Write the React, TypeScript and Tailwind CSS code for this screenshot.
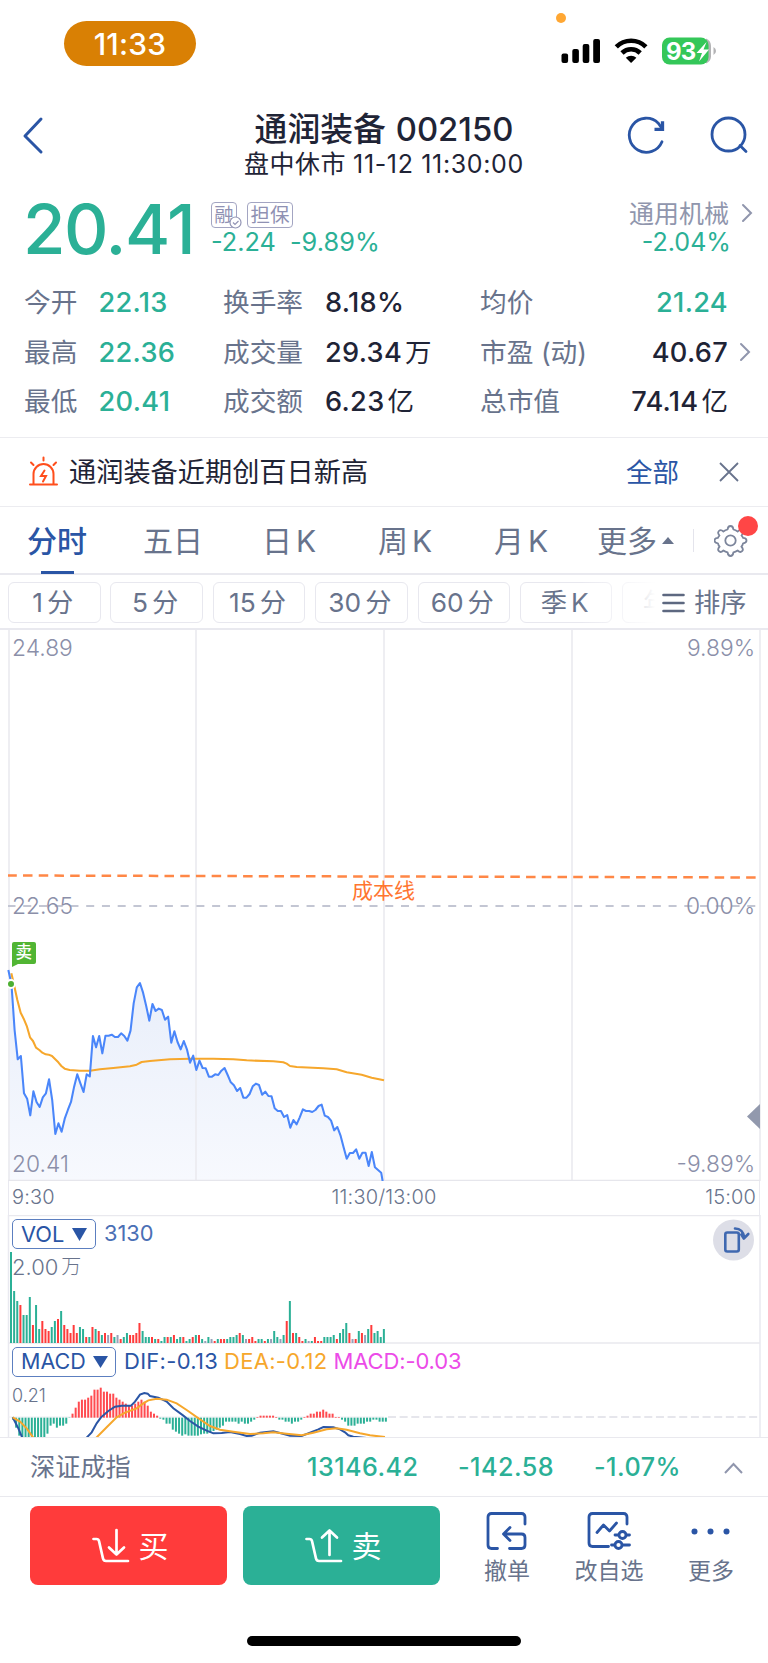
import type { FC, ReactNode } from 'react';

type Stat = { label: string; value: string; unit?: string; up?: boolean };

const STATS: Stat[][] = [
    [
        { label: '今开', value: '22.13', up: true },
        { label: '换手率', value: '8.18%' },
        { label: '均价', value: '21.24', up: true },
    ],
    [
        { label: '最高', value: '22.36', up: true },
        { label: '成交量', value: '29.34', unit: '万' },
        { label: '市盈 (动)', value: '40.67' },
    ],
    [
        { label: '最低', value: '20.41', up: true },
        { label: '成交额', value: '6.23', unit: '亿' },
        { label: '总市值', value: '74.14', unit: '亿' },
    ],
];

const TABS: [string, string][] = [
    ['分时', ''],
    ['五日', ''],
    ['日', 'K'],
    ['周', 'K'],
    ['月', 'K'],
];

const PERIODS: [string, string][] = [
    ['1', '分'],
    ['5', '分'],
    ['15', '分'],
    ['30', '分'],
    ['60', '分'],
    ['季', 'K'],
    ['年', 'K'],
];

// One value per minute, in thirds of a pixel below the cost line area.
const STEP = 9.4;
const PRICE = [
    330, 372, 510, 598, 588, 700, 716, 766, 694, 726, 741, 712, 700, 658, 720,
    822, 790, 815, 776, 750, 726, 680, 643, 670, 696, 643, 649, 528, 562, 528,
    580, 527, 527, 524, 531, 531, 520, 528, 542, 512, 430, 382, 369, 398, 438,
    482, 432, 453, 446, 450, 479, 470, 548, 514, 546, 568, 543, 568, 608, 587,
    630, 602, 624, 625, 650, 650, 643, 645, 632, 624, 645, 667, 676, 693, 684,
    713, 713, 702, 679, 671, 675, 704, 695, 708, 709, 745, 753, 753, 771, 765,
    803, 780, 793, 772, 748, 753, 753, 756, 750, 738, 734, 767, 771, 782, 811,
    801, 826, 862, 896, 879, 879, 868, 896, 878, 878, 918, 876, 922, 930, 938,
];

const AVERAGE =
    '34,340 40,365 52,420 62,458 71,476 81,500 90,532 99,543 108,563 118,570 127,578 137,583 146,584 156,588 165,597 175,607 184,618 194,626 209,630 240,632 270,632 300,628 340,624 390,619 410,614 425,606 450,603 510,598 570,596 640,596 700,598 740,601 820,604 850,607 860,611 870,618 890,621 970,625 1010,628 1040,637 1085,644 1115,653 1152,661';

// g = falling minute, r = rising, n = flat; the number is half the bar height.
const VOLUME =
    'g45.5 g26 g21 r19 g14 g14 g23 r9 g19 g7 r11 r7 r6 g8 g11 r12 g16 r9 r7 r5 r9 r5 g8 g7 r3 g3 r8 g7 r6 g4 r5 n4 r5 g3 n4 r2 g3 g5 r4 r4 r5 r10 g6 g3 g3 r3 g2 r2 g1 g3 r3 g3 r4 g2 g3 r3 g1 g2 r3 g4 r4 g2 n1 g3 n2 r1 g2 r2 r2 g2 g3 g3 g4 r5 g4 n2 r2 r3 r1 g2 g2 r1 g2 n2 g6 g3 n2 g4 r11 g21 r5 g5 r3 r1 g2 n1 g1 r3 r1 r1 g3 g3 g3 g4 r2 g5 g7 g10 r5 n2 r2 g6 r5 n4 g7 r9 g5 g6 g3 g7';

const MACD = [
    -6, -30, -54, -60, -60, -60, -60, -60, -60, -60, -60, -48, -24, -18, -30,
    -24, -24, -18, -1, 12, 30, 48, 54, 54, 60, 66, 84, 84, 90, 78, 78, 72, 72,
    60, 54, 48, 42, 36, 36, 42, 48, 54, 48, 36, 18, 12, 6, -3, -6, -18, -18,
    -36, -42, -48, -54, -50, -54, -54, -54, -54, -50, -48, -48, -44, -40, -36,
    -30, -24, -12, -12, -12, -12, -18, -12, -18, -18, -12, -6, 2, 6, 6, 6, 6,
    6, 2, -6, -6, -12, -12, -18, -12, -12, -6, 2, 6, 12, 12, 18, 18, 24, 18, 12,
    12, 2, 2, -6, -12, -24, -24, -24, -18, -18, -18, -12, -12, -6, -6, -12, -12,
    -12,
];

const DIF =
    'M38,652 L55,685 68,716 M257,716 L275,697 290,670 303,652 325,633 345,620 365,617 393,617 405,605 420,584 433,579 443,581 450,588 475,593 500,605 520,625 550,647 570,663 595,680 620,692 640,700 665,699 690,696 720,702 740,708 755,707 780,698 820,694 840,699 870,707 905,708 930,698 955,688 970,681 1000,682 1020,688 1035,697 1045,706 1060,710 1100,714';
const DEA =
    'M38,652 L60,665 80,685 102,716 M286,716 L320,682 350,652 375,638 410,625 430,610 445,601 470,596 500,599 530,610 560,630 600,658 630,678 660,689 700,695 750,702 790,700 820,697 860,701 905,706 940,698 980,688 1010,685 1040,689 1080,700 1110,706 1155,711';

const BAR_FILL: Record<string, string> = {
    g: '#2bb096',
    r: '#ff3b3b',
    n: '#98a0b8',
};

const Status: FC = () => (
    <div className="relative flex h-[95px] items-start">
        <div className="ml-[64px] mt-[21px] flex h-[45px] w-[132px] items-center justify-center rounded-full bg-[#d98004] pt-px text-[30px] font-medium leading-none tracking-[0.2px] text-white">
            11:33
        </div>
        <div className="absolute left-[556px] top-[13px] size-[10px] rounded-full bg-[#ffa733]" />
        <svg
            className="absolute left-[560px] top-[36px]"
            width="160"
            height="30"
            viewBox="560 36 160 30"
        >
            <rect x="561.5" y="53.5" width="6.6" height="9.5" rx="2" />
            <rect x="572.3" y="49" width="6.6" height="14" rx="2" />
            <rect x="582.7" y="44" width="6.6" height="19" rx="2" />
            <rect x="593.2" y="39" width="6.8" height="24" rx="2" />
            <g fill="none" stroke="#000" strokeWidth="4.6">
                <path d="M616.3 46.8a21 21 0 0 1 29.6 0" />
                <path d="M622 53a13 13 0 0 1 18.2 0" />
            </g>
            <path d="M631.1 63l-5.3-5.2a7.6 7.6 0 0 1 10.6 0z" />
            <path d="M706 38.5a8 8 0 0 1 5 7v11a8 8 0 0 1-5 7z" fill="#b3b3b5" />
            <path d="M713.5 47v8q2.5-1.5 2.5-4t-2.5-4z" fill="#b3b3b5" />
            <rect x="662" y="37.5" width="46.5" height="27" rx="7.5" fill="#34c759" />
            <path d="M706.5 42l-10 11h5.500l-3 8.500 10-12h-5.500z" fill="#fff" />
        </svg>
        <span className="absolute left-[666px] top-[39.5px] text-[24px] font-bold leading-none tracking-[-0.8px] text-white">
            93
        </span>
    </div>
);

const Header: FC = () => (
    <header className="grid h-[90px] grid-cols-[200px_1fr_200px] text-[#1f2436]">
        <svg width="200" height="90" fill="none" stroke="#2a55a5">
            <path
                d="M41 24L25 41l16 16"
                strokeWidth="3"
                strokeLinecap="round"
                strokeLinejoin="round"
            />
        </svg>
        <div className="flex flex-col items-center whitespace-nowrap">
            <h1 className="mt-[17px] flex h-[34px] items-center gap-[10px] text-[32.8px] font-medium leading-none">
                <span>通润装备</span>
                <span>002150</span>
            </h1>
            <p className="mt-[5px] flex h-[26px] items-center gap-[7px] text-[25px] leading-none">
                <span className="tracking-[0.5px]">盘中休市</span>
                <span className="tracking-[0.65px]">11-12 11:30:00</span>
            </p>
        </div>
        <svg
            width="200"
            height="90"
            viewBox="568 95 200 90"
            fill="none"
            stroke="#2a55a5"
            strokeWidth="2.8"
            strokeLinecap="round"
        >
            <path d="M662 141.7A17 17 0 1 1 658.3 123.2L662 128.5" />
            <path d="M654.5 129.3h8v-8" strokeLinecap="butt" strokeWidth="3.3" />
            <circle cx="728.5" cy="134.5" r="16.5" />
            <path d="M740 145.5l6 6" />
        </svg>
    </header>
);

const Chevron: FC = () => (
    <svg
        width="12"
        height="20"
        viewBox="0 0 12 20"
        fill="none"
        stroke="#9096ad"
        strokeWidth="2"
        strokeLinecap="round"
    >
        <path d="M2 2l8 8-8 8" />
    </svg>
);

const Tag: FC<{ children: ReactNode }> = ({ children }) => (
    <span className="flex h-[26px] items-center justify-center rounded-[4px] border border-[#a3a5c2] pt-px text-[19.5px] leading-none text-[#8f91b3]">
        {children}
    </span>
);

const Quote: FC = () => (
    <section className="flex h-[92px] whitespace-nowrap text-[#2bb096]">
        <div className="ml-[23px] mt-[9px] w-[188px] text-[69px] font-medium leading-[70px] tracking-[-1.4px]">
            20.41
        </div>
        <div className="mt-[17px] flex-1">
            <div className="relative flex gap-[10px]">
                <div className="grid w-[26px]">
                    <Tag>融</Tag>
                </div>
                <div className="grid w-[46px]">
                    <Tag>担保</Tag>
                </div>
                <svg
                    className="absolute left-[18px] top-[14px]"
                    width="13"
                    height="13"
                    viewBox="0 0 13 13"
                    fill="#fff"
                    stroke="#9395b5"
                    strokeWidth="1.2"
                >
                    <circle cx="6.5" cy="6.5" r="5.5" />
                    <path d="M4 6.5l2 2 3.5-3.5" fill="none" />
                </svg>
            </div>
            <div className="-mt-px flex gap-[14px] text-[25.3px] leading-[30px]">
                <span>-2.24</span>
                <span className="tracking-[0.1px]">-9.89%</span>
            </div>
        </div>
        <div className="mr-[37px] mt-[15px] text-right">
            <div className="pr-[2px] text-[25px] leading-[28px] text-[#9096ad]">
                通用机械
            </div>
            <div className="-mt-px text-[25.1px] leading-[30px]">-2.04%</div>
        </div>
        <div className="-ml-[27px] mr-[15px] mt-[18px]">
            <Chevron />
        </div>
    </section>
);

const StatCell: FC<{ stat: Stat }> = ({ stat }) => (
    <span
        className={`flex items-center text-[27.2px] font-medium tracking-[0.3px] ${stat.up ? 'text-[#2bb096]' : 'text-[#1f2436]'}`}
    >
        {stat.value}
        {stat.unit && (
            <span className="ml-[3px] text-[26.5px] font-normal tracking-normal">
                {stat.unit}
            </span>
        )}
    </span>
);

const Stats: FC = () => (
    <section className="h-[161px] border-b border-[#ececf0] pt-px">
        {STATS.map(([a, b, c], i) => (
            <div
                key={a.label}
                className="grid h-[49.5px] grid-cols-[74.5px_124.5px_102px_155px_110px_138px_40px] items-center whitespace-nowrap pl-[24px] text-[26.7px] leading-none text-[#68738c]"
            >
                <span>{a.label}</span>
                <StatCell stat={a} />
                <span>{b.label}</span>
                <StatCell stat={b} />
                <span>{c.label}</span>
                <div className="flex justify-end">
                    <StatCell stat={c} />
                </div>
                {i === 1 && (
                    <div className="pl-[11px]">
                        <Chevron />
                    </div>
                )}
            </div>
        ))}
    </section>
);

const Notice: FC = () => (
    <section className="flex h-[69px] items-center whitespace-nowrap border-b border-[#ececf0] text-[27.2px] leading-none">
        <svg
            className="ml-[28px]"
            width="32"
            height="32"
            viewBox="28 456 32 32"
            fill="none"
            stroke="#ff4e1c"
            strokeWidth="2"
            strokeLinecap="round"
        >
            <path d="M30 484.5h27M33.5 484v-10a10 10 0 0 1 20 0v10M43.5 457.5v3M31 462.5l2.5 2.5M56 462.5l-2.5 2.5M44.5 470.5l-3.5 5.5h5l-3 5.5" />
        </svg>
        <span className="ml-[9px] flex-1 pt-[2px] text-[#1f2436]">
            通润装备近期创百日新高
        </span>
        <span className="text-[26.5px] text-[#2a55a5]">全部</span>
        <svg
            className="ml-[40px] mr-[29px]"
            width="20"
            height="20"
            stroke="#68738c"
            strokeWidth="1.8"
        >
            <path d="M1 1l18 18M19 1L1 19" />
        </svg>
    </section>
);

const Tabs: FC = () => (
    <nav className="flex h-[68px] items-center whitespace-nowrap border-b-2 border-[#e9e9ef] text-[30px] leading-none text-[#68738c]">
        <div className="-ml-px flex h-full pt-[2px]">
            {TABS.map(([a, b], i) => (
                <div
                    key={a}
                    className={`relative flex w-[116px] items-center justify-center gap-[4px] ${i === 0 ? 'font-medium text-[#2a55a5]' : ''}`}
                >
                    <span>{a}</span>
                    {b && <span>{b}</span>}
                    {i === 0 && (
                        <span className="absolute bottom-[-1px] left-[42px] h-[3px] w-[33px] bg-[#2a55a5]" />
                    )}
                </div>
            ))}
        </div>
        <span className="ml-[18px] pt-[2px]">更多</span>
        <svg className="ml-[5px]" width="12" height="7" fill="#68738c">
            <path d="M6 0l6 7H0z" />
        </svg>
        <span className="ml-[19px] h-[23px] w-px bg-[#e4e4ec]" />
        <svg
            className="ml-[20px]"
            width="50"
            height="50"
            viewBox="714 515 50 50"
            fill="none"
            stroke="#7c859b"
            strokeWidth="1.8"
            strokeLinejoin="round"
        >
            <circle cx="730.5" cy="540.5" r="5.2" />
            <path d="M727.6 529.5q.3-3.5 2.900-3.500t2.900 3.500q2.300.6 4.200 2 2.700-2.400 4.500-.5t-.6 4.500q1.300 1.700 1.600 2.400 3.400.2 3.400 2.700t-3.400 2.700q-.5 2.100-1.700 3.400 2.500 2.700.7 4.500t-4.500-.7q-2 1.400-4.200 1.900-.3 3.600-2.900 3.600t-2.900-3.600q-2.200-.5-4.200-1.900-2.700 2.500-4.500.7t.7-4.500q-1.200-1.300-1.700-3.400-3.400-.2-3.400-2.700t3.400-2.700q.3-.7 1.600-2.400-2.400-2.600-.6-4.500t4.500.5q1.900-1.400 4.200-2z" />
            <circle cx="748" cy="526" r="10" fill="#ff4646" stroke="none" />
        </svg>
    </nav>
);

const Periods: FC = () => (
    <div className="relative flex h-[55px] items-center overflow-hidden whitespace-nowrap border-b-2 border-[#e9e9ef] pl-[8px] pt-px text-[26.3px] leading-none text-[#68738c]">
        <div className="flex gap-[9.9px]">
            {PERIODS.map(([a, b]) => (
                <span
                    key={a}
                    className="flex h-[41px] w-[92.5px] shrink-0 items-center justify-center gap-[4px] rounded-[6px] border-[1.5px] border-[#e8e8ef] pr-[3px] pt-[2px]"
                >
                    <span>{a}</span>
                    <span>{b}</span>
                </span>
            ))}
        </div>
        <div className="absolute inset-y-0 right-0 flex w-[188px] items-center bg-linear-to-r from-white/0 to-white to-40% pt-[2px]">
            <svg
                className="ml-[82px]"
                width="23"
                height="20"
                stroke="#5d6880"
                strokeWidth="2.6"
                strokeLinecap="round"
            >
                <path d="M1.5 2h20M1.5 10h20M1.5 18h20" />
            </svg>
            <span className="ml-[9px] pt-px">排序</span>
        </div>
    </div>
);

const PricePlot: FC = () => {
    const points = PRICE.map((y, i) => `${25 + i * STEP},${y}`).join(' ');
    return (
        <div className="relative h-[551px] text-[22.8px] font-light leading-none text-[#8b8fa9]">
            <svg className="block" width="768" height="551" fill="none">
                <defs>
                    <linearGradient id="area" x1="0" y1="0" x2="0" y2="1">
                        <stop offset="0" stopColor="#e8eefa" />
                        <stop offset="1" stopColor="#f7f9fe" />
                    </linearGradient>
                </defs>
                <g transform="translate(0 230) scale(0.33333)">
                    <polygon
                        points={`25,962 ${points} 1148,962`}
                        fill="url(#area)"
                    />
                </g>
                <path
                    d="M9 0V551M196 0V551M384 0V551M572 0V551M760 0V551"
                    stroke="#ebebf0"
                    strokeWidth="1.7"
                />
                <path d="M8 550.5H760" stroke="#e6e6ec" strokeWidth="1.5" />
                <path
                    d="M8 245.5L760 247.5"
                    stroke="#ff8746"
                    strokeWidth="2.5"
                    strokeDasharray="9.5 6.22"
                    strokeDashoffset="0.7"
                />
                <path
                    d="M8 276H757"
                    stroke="#c3c6d3"
                    strokeWidth="2"
                    strokeDasharray="8 7.74"
                    strokeDashoffset="0.5"
                />
                <g
                    transform="translate(0 230) scale(0.33333)"
                    strokeWidth="6.2"
                    strokeLinejoin="round"
                >
                    <polyline points={AVERAGE} stroke="#f6a72c" />
                    <polyline points={`${points} 1148,964`} stroke="#4a86fa" />
                </g>
                <circle
                    cx="11"
                    cy="354"
                    r="4"
                    fill="#4caf32"
                    stroke="#fff"
                    strokeWidth="2"
                />
                <path d="M12 314q0-2 2-2h20q2 0 2 2v18q0 2-2 2H18l-6 3z" fill="#51b533" />
                <path d="M760 474v25l-13-12.5z" fill="#9299ad" />
            </svg>
            <span className="absolute left-[12px] top-[7px]">24.89</span>
            <span className="absolute right-[13px] top-[7px]">9.89%</span>
            <span className="absolute left-[12px] top-[265px]">22.65</span>
            <span className="absolute right-[13px] top-[265px]">0.00%</span>
            <span className="absolute left-[12px] top-[523px]">20.41</span>
            <span className="absolute right-[13px] top-[523px]">-9.89%</span>
            <span className="absolute left-[352px] top-[250px] text-[21px] font-normal text-[#ff7530]">
                成本线
            </span>
            <span className="absolute left-[15.5px] top-[314px] text-[16.5px] font-medium text-white">
                卖
            </span>
        </div>
    );
};

const TimeAxis: FC = () => (
    <div className="mx-[8px] grid h-[34px] grid-cols-3 items-center border-x-[1.5px] border-[#e9e9f0] px-[3px] pb-[2px] text-[20px] font-light leading-none tracking-[0.15px] text-[#68738c]">
        <span>9:30</span>
        <span className="text-center">11:30/13:00</span>
        <span className="text-right">15:00</span>
    </div>
);

const VolumePanel: FC = () => (
    <div className="relative h-[129px] text-[22px] leading-none">
        <svg className="block" width="768" height="129">
            <path
                d="M8 .5H760M8 128H760"
                stroke="#e9e9ee"
                strokeWidth="1.5"
                fill="none"
            />
            <path d="M8.5 0V129M760 0V129" stroke="#e9e9f0" strokeWidth="1.5" />
            {VOLUME.split(' ').map((bar, i) => {
                const h = Number(bar.slice(1)) * 2;
                return (
                    <rect
                        key={i}
                        x={10 + (i * STEP) / 3}
                        y={128 - h}
                        width="2"
                        height={h}
                        fill={BAR_FILL[bar[0]]}
                    />
                );
            })}
            <circle cx="733.5" cy="25" r="20.5" fill="#dddee7" />
            <g
                fill="none"
                stroke="#3f68b0"
                strokeWidth="2.6"
                strokeLinecap="round"
                strokeLinejoin="round"
            >
                <rect x="725.3" y="17.5" width="13.5" height="19" rx="2" />
                <path d="M735 13.5q8 0 9.5 9.5M743.8 23.5l4.5-4.5M743.8 23.5l-2.5-4" />
            </g>
        </svg>
        <div className="absolute left-[12px] top-[4px] flex h-[30px] w-[84px] items-center rounded-[5px] border-[1.5px] border-[#5c7fc0] pl-[8px] pt-px text-[21.8px] text-[#2a55a5]">
            VOL
            <svg className="ml-[8px]" width="15" height="13" fill="#2a55a5">
                <path d="M0 0h15l-7.5 13z" />
            </svg>
        </div>
        <span className="absolute left-[104px] top-[8px] text-[21.8px] text-[#4a6fb5]">
            3130
        </span>
        <div className="absolute left-[12px] top-[41px] flex items-center gap-[3px] font-light text-[#68738c]">
            <span>2.00</span>
            <span className="text-[20px]">万</span>
        </div>
    </div>
);

const MacdPanel: FC = () => (
    <div className="relative h-[93px] overflow-hidden text-[21.5px] leading-none">
        <svg className="block" width="768" height="93" fill="none">
            <path d="M8.5 0V93M760 0V93" stroke="#e9e9f0" strokeWidth="1.5" />
            <path d="M8 73H384" stroke="#ececf0" />
            <path
                d="M388 73H760"
                stroke="#e6e6ec"
                strokeWidth="1.8"
                strokeDasharray="8 3.65"
            />
            <g transform="translate(0 -144) scale(0.33333)">
                {MACD.map((v, i) => (
                    <rect
                        key={i}
                        x={36 + i * STEP}
                        y={v > 0 ? 653 - v : 653}
                        width="6"
                        height={Math.abs(v)}
                        fill={v > 0 ? '#ff4b50' : '#2bb096'}
                    />
                ))}
                <path d={DIF} stroke="#2a55a5" strokeWidth="6" />
                <path d={DEA} stroke="#f6a72c" strokeWidth="6" />
            </g>
        </svg>
        <div className="absolute left-[12px] top-[3px] flex h-[29.5px] w-[104px] items-center rounded-[5px] border-[1.5px] border-[#5c7fc0] pl-[8px] text-[#2a55a5]">
            MACD
            <svg className="ml-[7px]" width="15" height="12" fill="#2a55a5">
                <path d="M0 0h15l-7.5 12z" />
            </svg>
        </div>
        <div className="absolute left-[124px] top-[6px] whitespace-nowrap text-[22px] tracking-[0.28px]">
            <span className="text-[#2a55a5]">DIF:-0.13</span>
            <span className="ml-[6px] text-[#f6a72c]">DEA:-0.12</span>
            <span className="ml-[6px] tracking-[-0.12px] text-[#ec4be8]">
                MACD:-0.03
            </span>
        </div>
        <span className="absolute left-[12px] top-[43px] text-[18px] font-light text-[#68738c]">
            0.21
        </span>
    </div>
);

const IndexBar: FC = () => (
    <div className="flex h-[60px] items-center whitespace-nowrap border-y-[1.5px] border-[#e9e9ee] pt-[2px] text-[25.2px] leading-none">
        <span className="ml-[30px] w-[277px] text-[#68738c]">深证成指</span>
        <div className="flex font-medium tracking-[0.45px] text-[#2bb096]">
            <span className="w-[151px]">13146.42</span>
            <span className="w-[136px]">-142.58</span>
            <span className="w-[130px]">-1.07%</span>
        </div>
        <svg width="20" height="12" fill="none" stroke="#9096ad" strokeWidth="2">
            <path d="M1 11l8.5-9 8.5 9" />
        </svg>
    </div>
);

const TradeButton: FC<{ label: string; buy?: boolean }> = ({ label, buy }) => (
    <button
        className={`flex h-[79px] w-[197px] items-center justify-center gap-[9px] rounded-[8px] pl-[3px] text-[30px] leading-none text-white ${buy ? 'bg-[#ff3b3b]' : 'bg-[#2bb096]'}`}
    >
        <svg
            width="38"
            height="36"
            fill="none"
            stroke="#fff"
            strokeWidth="2.7"
            strokeLinecap="round"
            strokeLinejoin="round"
        >
            <path d="M1.5 11h3q2 0 2.5 2l4 17.5q.6 2.5 3 2.5H36" />
            {buy ? (
                <path d="M24.5 2v24.500M17 19.5l7.5 7 7.5-7" />
            ) : (
                <path d="M24.5 27V2.5M17 9.5l7.5-7 7.5 7" />
            )}
        </svg>
        <span className="mt-px">{label}</span>
    </button>
);

const Action: FC<{ label: string; children: ReactNode }> = ({
    label,
    children,
}) => (
    <div className="flex w-[102px] shrink-0 flex-col items-center text-[23px] leading-none text-[#68738c]">
        <svg
            width="44"
            height="40"
            viewBox="0 0 44 40"
            fill="none"
            stroke="#2a55a5"
            strokeWidth="2.8"
            strokeLinecap="round"
            strokeLinejoin="round"
        >
            {children}
        </svg>
        <span className="mt-[9px]">{label}</span>
    </div>
);

const Footer: FC = () => (
    <footer className="h-[166px]">
        <div className="flex h-[88px] pl-[30px] pt-[9px]">
            <TradeButton label="买" buy />
            <div className="ml-[16px]">
                <TradeButton label="卖" />
            </div>
            <div className="ml-[16px] mt-[5px] flex">
                <Action label="撤单">
                    <path d="M40 13V6q0-3.500-3.500-3.500H6.500Q3 2.500 3 6v28q0 3.500 3.500 3.500h6M24.500 37.500h12q3.500 0 3.500-3.500v-7.500q0-3.500-3.500-3.500H19.500M25 16.500L18.500 23l6.500 6.500" />
                </Action>
                <Action label="改自选">
                    <path d="M40 13V6q0-3.500-3.500-3.500H5.500Q2 2.500 2 6v26q0 3.500 3.500 3.500h16M10 21.500l6.500-7.500 6 6 7-8M28 24H31.500M39.500 24h3M27.500 34h-3M35.500 34h7" />
                    <circle cx="35.5" cy="24" r="3.5" />
                    <circle cx="31.5" cy="34" r="3.5" />
                </Action>
                <Action label="更多">
                    <g fill="#2a55a5" stroke="none">
                        <circle cx="5.500" cy="20.5" r="3" />
                        <circle cx="21.500" cy="20.5" r="3" />
                        <circle cx="37.500" cy="20.5" r="3" />
                    </g>
                </Action>
            </div>
        </div>
        <div className="mx-auto mt-[51px] h-[10px] w-[274px] rounded-full bg-black" />
    </footer>
);

export default function App() {
    return (
        <main className="h-[1663px] w-[768px] overflow-hidden bg-white font-['Inter','Noto_Sans_CJK_SC',sans-serif]">
            <Status />
            <Header />
            <Quote />
            <Stats />
            <Notice />
            <Tabs />
            <Periods />
            <PricePlot />
            <TimeAxis />
            <VolumePanel />
            <MacdPanel />
            <IndexBar />
            <Footer />
        </main>
    );
}
